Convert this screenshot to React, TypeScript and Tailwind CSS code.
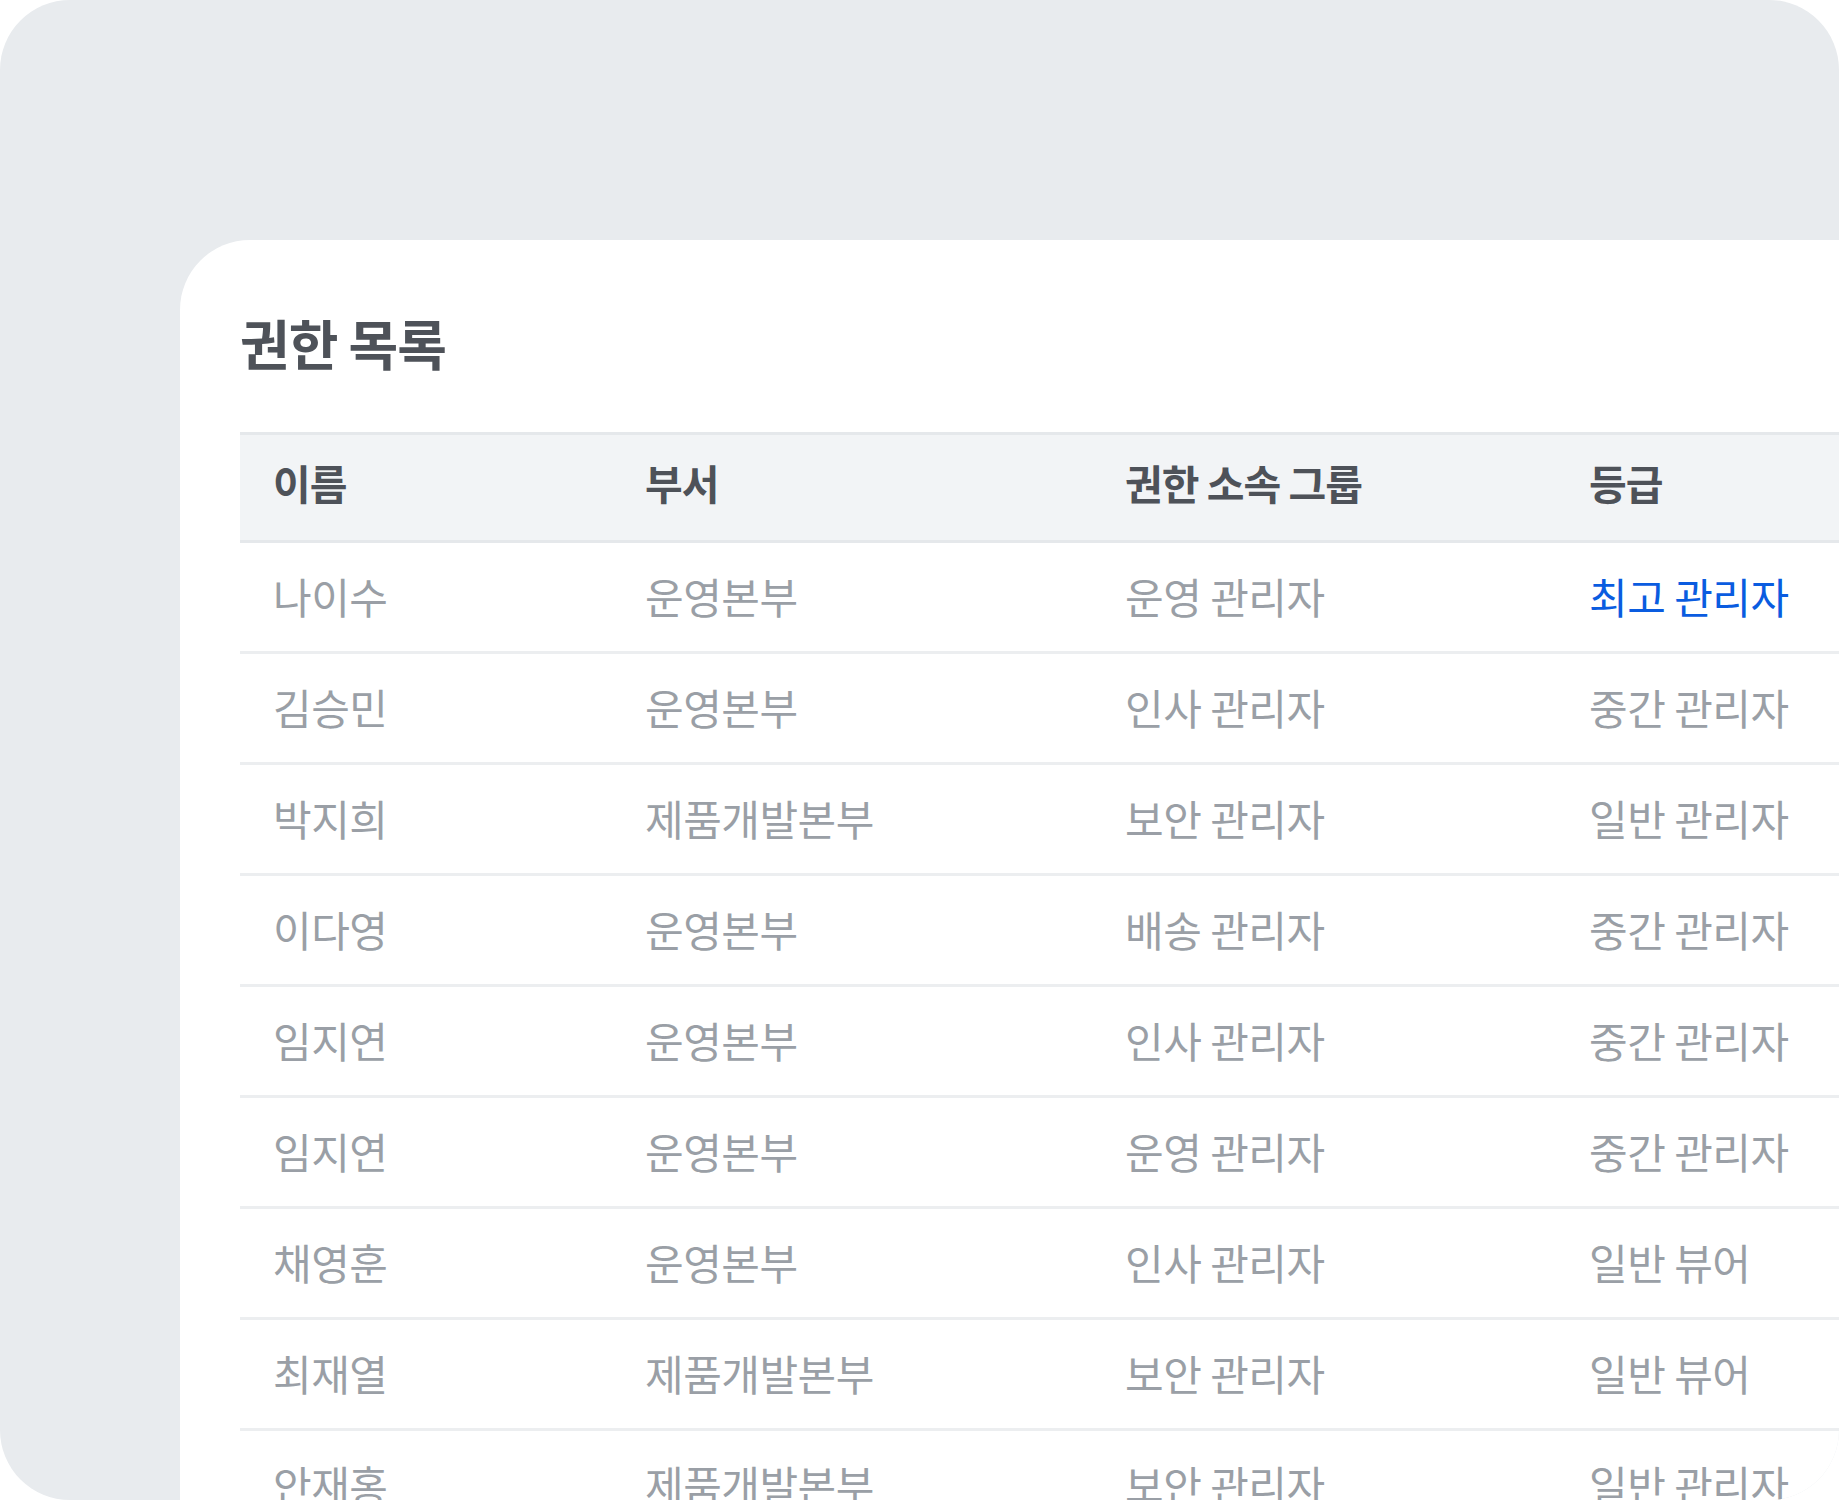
import React from "react";

const rows = [
  ["나이수", "운영본부", "운영 관리자", "최고 관리자"],
  ["김승민", "운영본부", "인사 관리자", "중간 관리자"],
  ["박지희", "제품개발본부", "보안 관리자", "일반 관리자"],
  ["이다영", "운영본부", "배송 관리자", "중간 관리자"],
  ["임지연", "운영본부", "인사 관리자", "중간 관리자"],
  ["임지연", "운영본부", "운영 관리자", "중간 관리자"],
  ["채영훈", "운영본부", "인사 관리자", "일반 뷰어"],
  ["최재열", "제품개발본부", "보안 관리자", "일반 뷰어"],
  ["안재홍", "제품개발본부", "보안 관리자", "일반 관리자"],
];

const cols = "grid grid-cols-[372px_480px_464px_1fr]";

export default function App() {
  return (
    <div
      className="w-[1839px] h-[1500px] overflow-hidden bg-[#e8ebee] rounded-[70px] pt-[240px] pl-[180px]"
      style={{ fontFamily: '"Noto Sans CJK KR", "Noto Sans", sans-serif' }}
    >
      <div className="bg-white rounded-tl-[70px] h-[1400px] pl-[60px] pt-[76px]">
        <h1 className="text-[54px] font-bold text-[#4e5259] leading-none tracking-[-1px] h-[116px]">권한 목록</h1>
        <div className="border-t-[3px] border-[#e5e8eb]">
          <div className={`${cols} bg-[#f2f4f6] h-[108px] items-center pl-[33px] pb-[10px] border-b-[3px] border-[#e5e8eb] text-[41px] font-bold text-[#4e5259] tracking-[-1px]`}>
            <div>이름</div>
            <div>부서</div>
            <div>권한 소속 그룹</div>
            <div>등급</div>
          </div>
          {rows.map((r, i) => (
            <div key={i} className={`${cols} h-[111px] items-center pl-[33px] pb-[4px] border-b-[3px] border-[#eceef0] text-[42px] text-[#9a9fa6] tracking-[-0.5px]`}>
              <div>{r[0]}</div>
              <div>{r[1]}</div>
              <div>{r[2]}</div>
              <div className={i === 0 ? "text-[#0a5ce0]" : ""}>{r[3]}</div>
            </div>
          ))}
        </div>
      </div>
    </div>
  );
}
